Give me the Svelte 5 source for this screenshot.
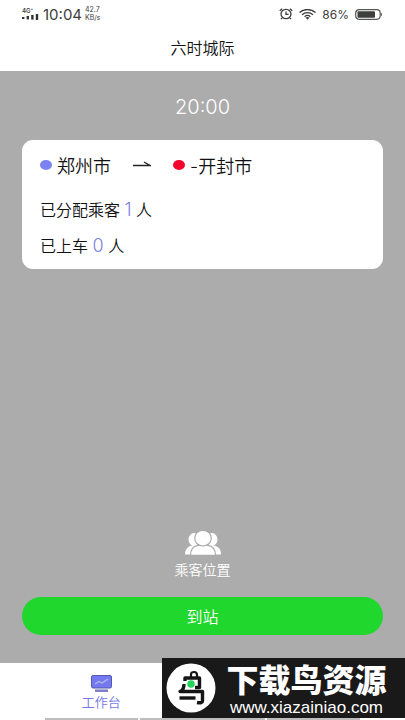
<script lang="ts">
  let trip = {
    time: '20:00',
    from: '郑州市',
    to: '-开封市',
    assigned: 1,
    boarded: 0
  };

  function handleArrive() {
    trip = { ...trip, boarded: trip.assigned };
  }
</script>

<div class="app">
  <header>
    <div class="status">
      <div class="status-left">
        <div class="signal">
          <span>4G⁺</span>
          <svg width="17" height="6" viewBox="0 0 17 6" fill="#333">
            <rect x="0" y="3" width="2.4" height="2" />
            <rect x="4.6" y="2" width="2.4" height="3.4" />
            <rect x="9.2" y="1" width="2.4" height="4.6" />
            <rect x="13.8" y="0" width="2.4" height="6" />
          </svg>
        </div>
        <span class="clock">10:04</span>
        <div class="speed">
          <span>42.7</span>
          <span>KB/s</span>
        </div>
      </div>
      <div class="status-right">
        <svg width="14" height="12" viewBox="0 0 14 12" fill="none" stroke="#3c3c3c" stroke-width="1.3">
          <ellipse cx="7" cy="6" rx="5" ry="4.6" />
          <path d="M7 3.4V6.4H9.6M.7 2.8 3.2.7M13.3 2.8 10.8.7M3.2 9.8 2 11.2M10.8 9.8 12 11.2" />
        </svg>
        <svg width="17" height="11" viewBox="0 0 17 11" fill="none" stroke="#3c3c3c" stroke-width="1.3">
          <path d="M.5 3.6C5-.5 12-.5 16.5 3.6M3 5.7C6.2 2.8 10.8 2.8 14 5.7M5.6 7.7C7.3 6.2 9.7 6.2 11.4 7.7" />
          <path d="M6.5 8.6Q8.5 7.4 10.5 8.6L8.5 10.8Z" fill="#3c3c3c" stroke="none" />
        </svg>
        <span class="percent">86%</span>
        <svg width="28" height="11" viewBox="0 0 28 11">
          <rect x=".7" y=".7" width="24.5" height="9.6" rx="3.5" fill="#fff" stroke="#555" stroke-width="1.2" />
          <rect x="2.5" y="2.3" width="17.5" height="6.4" rx="1" fill="#3c403c" />
          <path d="M26 3.5Q28 5.5 26 7.5Z" fill="#555" />
        </svg>
      </div>
    </div>
    <h1>六时城际</h1>
  </header>

  <main>
    <div class="time">{trip.time}</div>

    <section class="card">
      <div class="route">
        <i class="dot"></i>
        <span>{trip.from}</span>
        <svg class="arrow" width="18" height="8" viewBox="0 0 18 8" fill="none" stroke="#222" stroke-width="1.3">
          <path d="M0 4.5H17L11 1" />
        </svg>
        <i class="dot end"></i>
        <span>{trip.to}</span>
      </div>
      <p>已分配乘客 <b>{trip.assigned}</b> 人</p>
      <p>已上车 <b>{trip.boarded}</b> 人</p>
    </section>

    <div class="bottom">
      <button class="location">
        <svg width="36" height="26" viewBox="0 0 36 26" fill="#fff">
          <ellipse cx="9" cy="9.5" rx="5.5" ry="6.5" />
          <ellipse cx="27" cy="9.5" rx="5.5" ry="6.5" />
          <path d="M0 24.5C0 19 3 16 8 15.5H28C33 16 36 19 36 24.5Z" />
          <g stroke="#acacac" stroke-width="1.2">
            <path d="M5.5 25.3C5.5 19 9 16 13 15.3H23C27 16 30.5 19 30.5 25.3Z" />
            <ellipse cx="18" cy="8.2" rx="8.3" ry="7.8" />
          </g>
        </svg>
        <span>乘客位置</span>
      </button>
      <button class="arrive" on:click={handleArrive}>到站</button>
    </div>
  </main>

  <nav>
    <a href="#workbench">
      <svg width="21" height="17" viewBox="0 0 21 17">
        <rect x=".5" y=".5" width="20" height="12.5" rx="1.5" fill="#7379f0" stroke="#5559aa" />
        <path d="M4 9 8 6.5 11 8 17 4" fill="none" stroke="#b9bbdf" stroke-width="1.2" />
        <path d="M4 14.8H17" stroke="#999bc5" />
        <path d="M4 16H17" stroke="#5559bd" stroke-width="1.5" />
      </svg>
      <span>工作台</span>
    </a>
  </nav>
  <div class="strip"><i></i><i></i><i></i></div>

  <aside class="mark">
    <svg width="50" height="50" viewBox="0 0 50 50">
      <circle cx="25" cy="25" r="24.5" fill="#fff" />
      <g fill="none" stroke="#151515" stroke-width="3.4" stroke-linejoin="round">
        <path d="M25 14V11.5Q25 9 28 9Q31 9 31 12V14" stroke-width="2.2" />
        <path d="M19 18V15H33.5V24.5H29" />
        <path d="M18 21Q18 27 14 28.5H36.5V38Q36.500 40.500 31 39.500" />
        <path d="M13.500 35H29.500" />
      </g>
      <circle cx="25" cy="21" r="3.8" fill="#23d65a" />
    </svg>
    <div class="mark-text">
      <strong>下载鸟资源</strong>
      <span>www.xiazainiao.com</span>
    </div>
  </aside>
</div>

<style>
  :global(body) {
    margin: 0;
    background: #acacac;
  }

  .app {
    position: relative;
    display: flex;
    flex-direction: column;
    min-height: 100vh;
    background: #acacac;
    color: #111;
    font-family: Inter, "Noto Sans CJK SC", sans-serif;
    font-weight: 350;
  }

  header {
    background: #fff;
    padding-bottom: 11px;
  }

  .status {
    display: flex;
    justify-content: space-between;
    align-items: center;
    height: 28px;
    padding: 0 22px;
    color: #3c3c3c;
    font-weight: 400;
  }

  .status-left,
  .status-right {
    display: flex;
    align-items: center;
  }

  .status-left {
    gap: 3px;
  }

  .status-right {
    gap: 6px;
  }

  .signal,
  .speed {
    display: flex;
    flex-direction: column;
    line-height: 6px;
  }

  .signal {
    width: 18px;
    font-size: 6px;
    font-weight: 600;
  }

  .clock {
    font-size: 15px;
  }

  .speed {
    font-size: 7px;
    line-height: 8px;
  }

  .percent {
    font-size: 12px;
  }

  h1 {
    margin: 8px 0 0;
    font-size: 16px;
    line-height: 24px;
    font-weight: 350;
    text-align: center;
  }

  main {
    flex: 1;
    display: flex;
    flex-direction: column;
    padding: 24px 22px 28px;
  }

  .time {
    color: #fff;
    font-size: 20px;
    font-weight: 300;
    line-height: 24px;
    text-align: center;
  }

  .card {
    margin-top: 21px;
    padding: 12px 18px 5px;
    border-radius: 11px;
    background: #fff;
  }

  .route {
    display: flex;
    align-items: center;
    height: 26px;
    margin-bottom: 14px;
    font-size: 18px;
  }

  .dot {
    width: 12px;
    height: 10px;
    margin-right: 5px;
    border-radius: 50%;
    background: #7b82f2;
  }

  .dot.end {
    background: #f2052c;
  }

  .arrow {
    margin: 0 22px;
  }

  p {
    margin: 0;
    font-size: 16px;
    line-height: 36px;
  }

  b {
    color: #7b7fe6;
    font-size: 18px;
    font-weight: 300;
  }

  .bottom {
    display: flex;
    flex-direction: column;
    gap: 16px;
    margin-top: auto;
  }

  button {
    border: 0;
    color: #fff;
    font-family: inherit;
    font-weight: inherit;
    cursor: pointer;
  }

  .location {
    display: flex;
    flex-direction: column;
    align-items: center;
    align-self: center;
    gap: 3px;
    padding: 0;
    background: none;
    font-size: 14px;
    line-height: 22px;
  }

  .arrive {
    height: 38px;
    border-radius: 19px;
    background: #1fd72d;
    font-size: 16px;
  }

  nav {
    display: flex;
    background: #fff;
  }

  nav a {
    display: flex;
    flex-direction: column;
    align-items: center;
    width: 50%;
    padding: 12px 0 6px;
    color: #7379e8;
    font-size: 13px;
    line-height: 20px;
    text-decoration: none;
  }

  .strip {
    display: flex;
    gap: 2px;
    height: 2px;
    padding: 0 45px;
    background: #fff;
  }

  .strip i {
    flex: 3;
    background: #bdbdbd;
  }

  .strip i:nth-child(2) {
    flex: 4;
  }

  .mark {
    position: absolute;
    right: 0;
    bottom: 2px;
    display: flex;
    align-items: center;
    gap: 6px;
    box-sizing: border-box;
    height: 60px;
    padding: 0 14px 0 4px;
    background: #191919;
    color: #fff;
  }

  .mark-text {
    display: flex;
    flex-direction: column;
    align-items: center;
    width: 169px;
    padding-top: 4px;
  }

  strong {
    font-size: 32px;
    font-weight: 900;
    line-height: 36px;
    white-space: nowrap;
  }

  .mark-text span {
    font-family: "Liberation Sans", sans-serif;
    font-size: 17px;
    line-height: 18px;
  }
</style>
